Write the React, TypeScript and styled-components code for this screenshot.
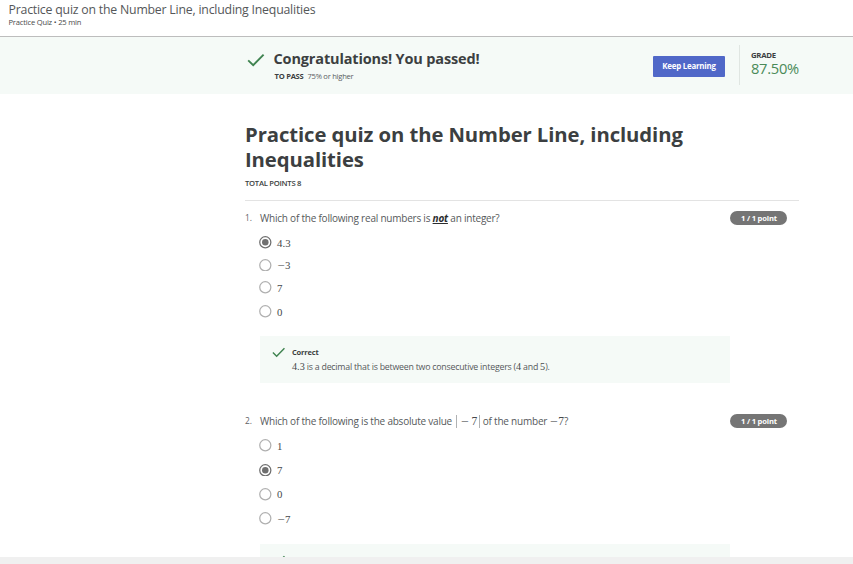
import React from "react";
import styled, { createGlobalStyle, css } from "styled-components";

const GlobalStyle = createGlobalStyle`
  * { box-sizing: border-box; }
  html, body { margin: 0; padding: 0; height: 100%; overflow: hidden; background: #fff; }
  body { font-family: "Open Sans", sans-serif; color: #3c3f41; }
`;

const Page = styled.div`
  display: flex;
  flex-direction: column;
  width: 853px;
  height: 564px;
  overflow: hidden;
`;

const Header = styled.header`
  flex: none;
  height: 37px;
  padding: 1px 0 0 8.5px;
  border-bottom: 1px solid #bdbdbd;
  white-space: nowrap;
`;

const HeaderTitle = styled.div`
  font-size: 12.3px;
  letter-spacing: -0.21px;
  line-height: 17px;
  color: #555759;
`;

const HeaderMeta = styled.div`
  font-size: 7.6px;
  letter-spacing: -0.2px;
  line-height: 9px;
  color: #4a4a4a;
`;

const Banner = styled.section`
  flex: none;
  display: flex;
  height: 57px;
  padding-left: 247px;
  background: #f5faf7;
  white-space: nowrap;
`;

const BannerCheck = styled.div`
  width: 26.5px;
  padding-top: 16px;
`;

const BannerText = styled.div`
  width: 379.5px;
  padding-top: 12px;
`;

const BannerTitle = styled.div`
  font-size: 14.5px;
  letter-spacing: -0.15px;
  font-weight: 700;
  line-height: 20px;
`;

const PassLine = styled.div`
  display: flex;
  gap: 4px;
  margin-top: 2px;
  padding-left: 1px;
  font-size: 7.6px;
  letter-spacing: -0.26px;
  line-height: 10px;
  color: #5a5d5f;

  strong { color: #3c3f41; }
`;

const KeepLearning = styled.button`
  width: 72px;
  height: 21px;
  margin: 19px 14px 0 0;
  padding: 0;
  border: 0;
  border-radius: 1px;
  background: #5068c8;
  color: #fff;
  font: 700 7.9px/21px "Open Sans", sans-serif;
  letter-spacing: -0.22px;
`;

const Grade = styled.div`
  height: 40px;
  margin-top: 8px;
  padding: 5px 0 0 11px;
  border-left: 1px solid #e0e6e2;
`;

const GradeLabel = styled.div`
  font-size: 7.8px;
  letter-spacing: -0.32px;
  font-weight: 700;
  line-height: 10px;
`;

const GradeValue = styled.div`
  font-size: 14.7px;
  letter-spacing: -0.28px;
  line-height: 17px;
  color: #4a8a59;
`;

const Content = styled.main`
  flex: 1;
  min-height: 0;
  width: 799px;
  padding: 28px 0 0 245px;
  overflow: hidden;
`;

const Title = styled.h1`
  margin: 0;
  font-size: 20.3px;
  letter-spacing: -0.09px;
  font-weight: 700;
  line-height: 25px;
`;

const TotalPoints = styled.div`
  height: 29px;
  padding-top: 6px;
  border-bottom: 1px solid #e3e3e3;
  font-size: 7.7px;
  letter-spacing: -0.28px;
  font-weight: 600;
  line-height: 10px;
`;

const Question = styled.section<{ $height: number }>`
  display: grid;
  grid-template-columns: 15px 470.4px 57px;
  grid-template-rows: 15px;
  align-content: start;
  height: ${(p) => p.$height}px;
  padding-top: 10px;
`;

const Num = styled.div`
  font-size: 8.4px;
  line-height: 14px;
  color: #5f6264;
`;

const Prompt = styled.div`
  display: flex;
  height: 15px;
  font-size: 10px;
  letter-spacing: -0.22px;
  line-height: 15px;
  color: #56595b;
  white-space: pre;

  em { font-weight: 700; color: #2b2d2f; text-decoration: underline; }
`;

const Badge = styled.div`
  height: 14.4px;
  border-radius: 8px;
  background: #757575;
  color: #fff;
  font-size: 7.6px;
  letter-spacing: -0.18px;
  font-weight: 700;
  line-height: 14px;
  text-align: center;
`;

const Options = styled.div<{ $rows: string; $after: number }>`
  grid-column: 2;
  display: grid;
  grid-template-rows: ${(p) => p.$rows};
  margin: 5.5px 0 ${(p) => p.$after}px;
`;

const Option = styled.label`
  display: flex;
  align-items: center;
  gap: 5.5px;
  margin-left: -1px;
`;

const MathText = styled.span<{ $size: number }>`
  font-family: "Liberation Serif", serif;
  font-size: ${(p) => p.$size}px;
  letter-spacing: 0;
  line-height: 1;
  color: #46494b;
`;

const OptionMath = styled(MathText)`
  padding-top: 1px;
`;

const Minus = styled.span`
  display: inline-block;
  width: 8px;
  text-align: center;
  transform: scaleX(1.2);
`;

const Absolute = styled.span`
  display: inline-flex;
  align-items: center;
  height: 15px;
  margin: 0 3px 0 3.5px;
`;

const Bar = styled.span<{ $side: "left" | "right" }>`
  width: 1px;
  height: 13px;
  background: #b0b2b3;
  ${(p) => (p.$side === "left" ? css`margin-right: 4px;` : css`margin-left: 1.5px;`)}
`;

const AbsDigit = styled.span`
  margin-left: 3px;
`;

const InlineMath = styled.span`
  display: inline-flex;
  align-items: center;
  height: 15px;
  margin-left: 3px;
`;

const Feedback = styled.div`
  grid-column: 2;
  display: flex;
  height: 46.5px;
  padding: 11px 0 0 12px;
  background: #f5faf7;
  white-space: nowrap;
`;

const FeedbackIcon = styled.div`
  width: 20px;
`;

const FeedbackTitle = styled.div`
  font-size: 7.5px;
  letter-spacing: -0.17px;
  font-weight: 700;
  line-height: 10px;
`;

const FeedbackText = styled.div`
  margin-top: 4px;
  font-size: 8.8px;
  letter-spacing: -0.23px;
  line-height: 13px;
  color: #56595b;
`;

const Footer = styled.footer`
  flex: none;
  height: 7px;
  background: #f0f0f0;
`;

const CheckIcon = styled.svg`
  display: block;
`;

const Check = ({ width }: { width: number }) => (
  <CheckIcon width={width} height={(width * 14) / 18} viewBox="0 0 18 14" fill="none">
    <path d="M1.2 7.4 6.2 12.2 16.6 1.6" stroke="#3f8350" strokeWidth="1.9" />
  </CheckIcon>
);

const Radio = ({ checked }: { checked?: boolean }) => (
  <svg width="12.6" height="12.6" viewBox="0 0 12 12">
    <circle cx="6" cy="6" r="5.3" fill="#fff" stroke={checked ? "#6f6f6f" : "#b0b0b0"} strokeWidth="1.2" />
    {checked && <circle cx="6" cy="6" r="3.1" fill="#6f6f6f" />}
  </svg>
);

type Answer = { value: string; negative?: boolean; checked?: boolean };

const Answers = ({ rows, after, items }: { rows: string; after: number; items: Answer[] }) => (
  <Options $rows={rows} $after={after}>
    {items.map((a) => (
      <Option key={`${a.negative}${a.value}`}>
        <Radio checked={a.checked} />
        <OptionMath $size={10.8}>
          {a.negative && <Minus>−</Minus>}
          {a.value}
        </OptionMath>
      </Option>
    ))}
  </Options>
);

const Correct = ({ children }: { children?: React.ReactNode }) => (
  <Feedback>
    <FeedbackIcon><Check width={13.5} /></FeedbackIcon>
    {children && (
      <div>
        <FeedbackTitle>Correct</FeedbackTitle>
        <FeedbackText>{children}</FeedbackText>
      </div>
    )}
  </Feedback>
);

export default function App() {
  return (
    <Page>
      <GlobalStyle />
      <Header>
        <HeaderTitle>Practice quiz on the Number Line, including Inequalities</HeaderTitle>
        <HeaderMeta>Practice Quiz • 25 min</HeaderMeta>
      </Header>
      <Banner>
        <BannerCheck><Check width={18} /></BannerCheck>
        <BannerText>
          <BannerTitle>Congratulations! You passed!</BannerTitle>
          <PassLine><strong>TO PASS</strong><span>75% or higher</span></PassLine>
        </BannerText>
        <KeepLearning>Keep Learning</KeepLearning>
        <Grade>
          <GradeLabel>GRADE</GradeLabel>
          <GradeValue>87.50%</GradeValue>
        </Grade>
      </Banner>
      <Content>
        <Title>Practice quiz on the Number Line, including Inequalities</Title>
        <TotalPoints>TOTAL POINTS 8</TotalPoints>
        <Question $height={203}>
          <Num>1.</Num>
          <Prompt>Which of the following real numbers is <em>not</em> an integer?</Prompt>
          <Badge>1 / 1 point</Badge>
          <Answers
            rows="22px 23px 22px 26.5px"
            after={11}
            items={[
              { value: "4.3", checked: true },
              { value: "3", negative: true },
              { value: "7" },
              { value: "0" },
            ]}
          />
          <Correct>
            <MathText $size={10.2}>4.3</MathText> is a decimal that is between two consecutive integers (
            <MathText $size={10.2}>4</MathText> and <MathText $size={10.2}>5</MathText>).
          </Correct>
        </Question>
        <Question $height={203}>
          <Num>2.</Num>
          <Prompt>
            Which of the following is the absolute value
            <MathText $size={11.5}>
              <Absolute>
                <Bar $side="left" />
                <Minus>−</Minus>
                <AbsDigit>7</AbsDigit>
                <Bar $side="right" />
              </Absolute>
            </MathText>
            of the number
            <MathText $size={11.5}>
              <InlineMath><Minus>−</Minus>7</InlineMath>
            </MathText>
            ?
          </Prompt>
          <Badge>1 / 1 point</Badge>
          <Answers
            rows="22.5px 26px 22.5px 26px"
            after={12.5}
            items={[
              { value: "1" },
              { value: "7", checked: true },
              { value: "0" },
              { value: "7", negative: true },
            ]}
          />
          <Correct />
        </Question>
      </Content>
      <Footer />
    </Page>
  );
}
